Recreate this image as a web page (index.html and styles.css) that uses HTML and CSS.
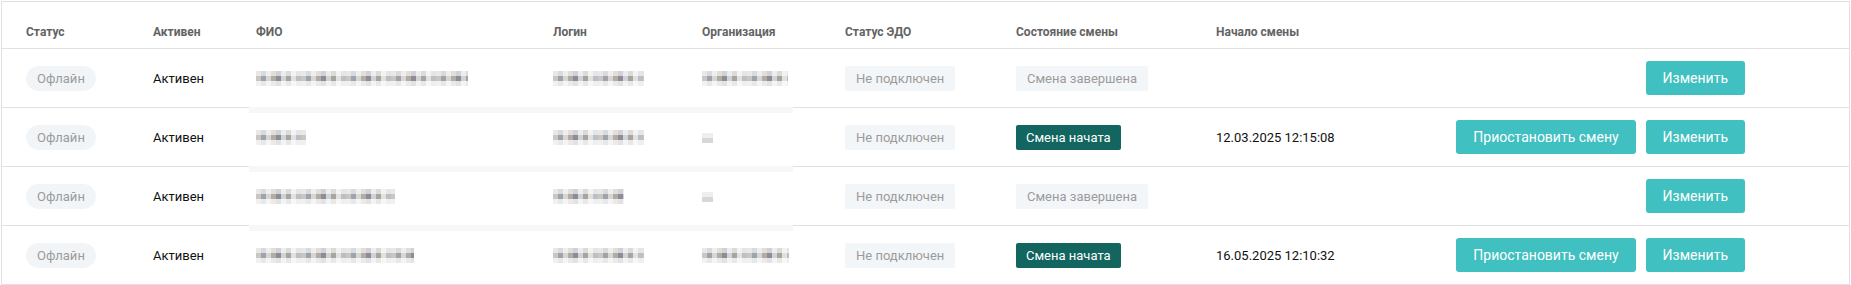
FILE: index.html
```html
<!DOCTYPE html>
<html lang="ru">
<head>
  <meta charset="UTF-8">
  <title>Сотрудники</title>
  <link rel="stylesheet" href="styles.css">
</head>
<body>
  <!-- Employees table -->
  <div class="staff-table">
    <div class="row head">
      <div>Статус</div>
      <div>Активен</div>
      <div>ФИО</div>
      <div>Логин</div>
      <div>Организация</div>
      <div>Статус ЭДО</div>
      <div>Состояние смены</div>
      <div>Начало смены</div>
      <div></div>
    </div>

    <div class="row">
      <div><span class="pill">Офлайн</span></div>
      <div>Активен</div>
      <div><span class="blur" style="width: 212px"></span></div>
      <div><span class="blur" style="width: 91px"></span></div>
      <div><span class="blur" style="width: 86px"></span></div>
      <div><span class="tag">Не подключен</span></div>
      <div><span class="tag">Смена завершена</span></div>
      <div></div>
      <div class="actions">
        <button class="btn">Изменить</button>
      </div>
    </div>

    <div class="row">
      <div><span class="pill">Офлайн</span></div>
      <div>Активен</div>
      <div><span class="blur" style="width: 50px"></span></div>
      <div><span class="blur" style="width: 91px"></span></div>
      <div><span class="blur small" style="width: 11px"></span></div>
      <div><span class="tag">Не подключен</span></div>
      <div><span class="tag started">Смена начата</span></div>
      <div>12.03.2025 12:15:08</div>
      <div class="actions">
        <button class="btn">Приостановить смену</button>
        <button class="btn">Изменить</button>
      </div>
    </div>

    <div class="row">
      <div><span class="pill">Офлайн</span></div>
      <div>Активен</div>
      <div><span class="blur" style="width: 139px"></span></div>
      <div><span class="blur" style="width: 71px"></span></div>
      <div><span class="blur small" style="width: 11px"></span></div>
      <div><span class="tag">Не подключен</span></div>
      <div><span class="tag">Смена завершена</span></div>
      <div></div>
      <div class="actions">
        <button class="btn">Изменить</button>
      </div>
    </div>

    <div class="row">
      <div><span class="pill">Офлайн</span></div>
      <div>Активен</div>
      <div><span class="blur" style="width: 158px"></span></div>
      <div><span class="blur" style="width: 91px"></span></div>
      <div><span class="blur" style="width: 87px"></span></div>
      <div><span class="tag">Не подключен</span></div>
      <div><span class="tag started">Смена начата</span></div>
      <div>16.05.2025 12:10:32</div>
      <div class="actions">
        <button class="btn">Приостановить смену</button>
        <button class="btn">Изменить</button>
      </div>
    </div>
  </div>
</body>
</html>
```

FILE: styles.css
```css
/* General */
body {
  margin: 1px;
  font-family: Roboto, 'Liberation Sans', sans-serif;
  font-size: 13px;
  color: #111;
  background: #fff;
}

/* Table */
.staff-table {
  border: 1px solid #e1e1e1;
  border-bottom: none;
}

.row {
  position: relative;
  display: grid;
  grid-template-columns: 127px 103px 297px 149px 143px 171px 200px 1fr auto;
  align-items: center;
  height: 58px;
  padding: 0 104px 0 24px;
  border-bottom: 1px solid #e1e1e1;
}

/* leftover strip from the masked columns */
.row + .row:not(:nth-child(2))::before {
  content: '';
  position: absolute;
  left: 247px;
  top: -1px;
  width: 544px;
  height: 6px;
  background: #f7f7f7;
}

.row.head {
  height: 47px;
  align-items: end;
  box-sizing: border-box;
  padding-bottom: 9px;
  font-size: 12px;
  font-weight: 700;
  color: #636363;
}

/* Status pill */
.pill {
  display: inline-block;
  height: 25px;
  line-height: 25px;
  padding: 0 11px;
  border-radius: 13px;
  background: #f2f5f8;
  color: #9b9b9b;
}

/* Tags */
.tag {
  display: inline-block;
  height: 25px;
  line-height: 25px;
  padding: 0 11px;
  border-radius: 2px;
  background: #f3f6f9;
  color: #9b9b9b;
}

.tag.started {
  padding: 0 10px;
  background: #12665f;
  color: #fff;
}

/* Masked personal data */
.blur {
  display: inline-block;
  height: 15px;
  vertical-align: middle;
  background:
    linear-gradient(to bottom, rgba(255, 255, 255, 0.6) 0 5px, rgba(255, 255, 255, 0) 5px 10px, rgba(255, 255, 255, 0.75) 10px),
    repeating-linear-gradient(90deg, #c9c6c3 0 5px, #9fa3aa 5px 10px, #d8d6d4 10px 15px, #b3aca5 15px 20px, #8e8d96 20px 25px, #cfd2d6 25px 30px, #a8a4a0 30px 35px, #e2e1df 35px 40px, #bcbfc4 40px 45px);
}

.blur.small {
  height: 10px;
  background: linear-gradient(to bottom, #eeeeee 0 5px, #d7d7d7 5px);
}

/* Buttons */
.actions {
  display: flex;
  justify-content: flex-end;
  gap: 10px;
}

.btn {
  height: 34px;
  padding: 0 17px;
  border: none;
  border-radius: 3px;
  background: #40c0c0;
  color: #fff;
  font-family: Roboto, 'Liberation Sans', sans-serif;
  font-size: 14px;
  cursor: pointer;
}
```
